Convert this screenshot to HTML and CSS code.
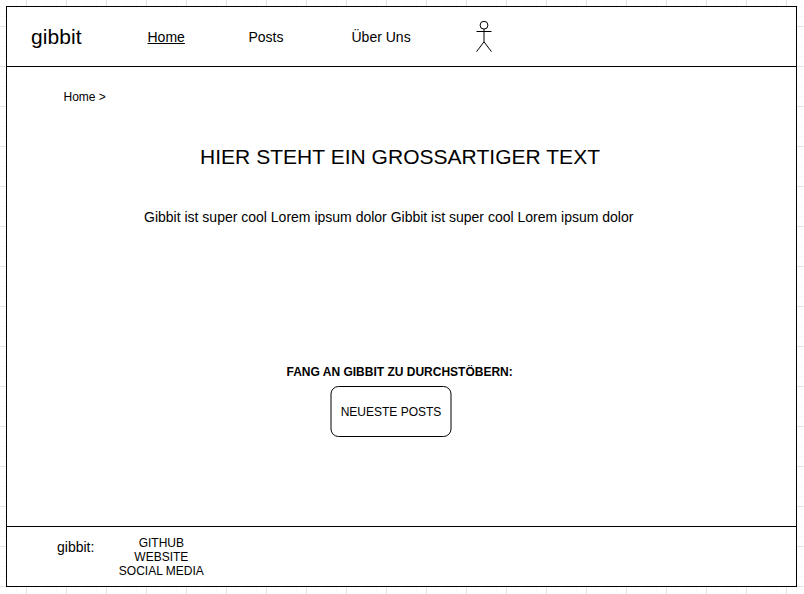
FILE: index.html
```html
<!DOCTYPE html>
<html lang="de">
<head>
<meta charset="utf-8">
<title>gibbit</title>
<link rel="stylesheet" href="styles.css">
</head>
<body>
<div class="page">
  <header class="header">
    <div class="brand">gibbit</div>
    <a class="link active">Home</a>
    <a class="link">Posts</a>
    <a class="link">Über Uns</a>
    <svg class="person" width="18" height="34" viewBox="0 0 18 34" fill="none" stroke="#000">
      <circle cx="9" cy="5.2" r="3.9"/>
      <path d="M9 9.1V21.75M1.5 11.5H16.5M9 21.75L1.5 31.75M9 21.75L16.5 31.75"/>
    </svg>
  </header>
  <main class="main">
    <div class="crumbs">Home &gt;</div>
    <h1 class="title">HIER STEHT EIN GROSSARTIGER TEXT</h1>
    <p class="intro">Gibbit ist super cool Lorem ipsum dolor Gibbit ist super cool Lorem ipsum dolor</p>
    <div class="prompt">FANG AN GIBBIT ZU DURCHSTÖBERN:</div>
    <a class="button">
      <svg class="outline" width="122" height="51" fill="none" stroke="#000">
        <rect x="1" y="0.5" width="120" height="50" rx="7.5"/>
      </svg>
      <span>NEUESTE POSTS</span>
    </a>
  </main>
  <footer class="footer">
    <div class="footer-brand">gibbit:</div>
    <div class="footer-links">
      <div>GITHUB</div>
      <div>WEBSITE</div>
      <div>SOCIAL MEDIA</div>
    </div>
  </footer>
</div>
</body>
</html>
```
FILE: styles.css
```css
* { box-sizing: border-box; }
html { height: 100%; }
body {
  margin: 0;
  height: 594px;
  padding: 6px 7px 7px 6px;
  overflow: hidden;
  font-family: "Liberation Sans", Arial, sans-serif;
  color: #000;
  background-color: #fff;
  background-image:
    linear-gradient(to right, #e3e3e3 1px, transparent 1px),
    linear-gradient(to bottom, #e3e3e3 1px, transparent 1px),
    linear-gradient(to right, #f9f9f9 1px, transparent 1px),
    linear-gradient(to bottom, #f9f9f9 1px, transparent 1px);
  background-size: 40px 40px, 40px 40px, 10px 10px, 10px 10px;
  background-position: 26px 26px, 26px 26px, 6px 6px, 6px 6px;
}
.page {
  display: grid;
  grid-template-rows: 60px 460px 59px;
  height: 581px;
  border: 1px solid #000;
  background: #fff;
}
.header {
  display: grid;
  grid-template-columns: 116.5px 101px 103px 123px 18px;
  align-items: center;
  padding-left: 24px;
  border-bottom: 1px solid #000;
}
.brand { font-size: 21px; line-height: 24px; letter-spacing: 0.1px; }
.link { padding-top: 2px; font-size: 14px; line-height: 17px; }
.active { text-decoration: underline; }
.person { display: block; }
.main {
  display: flex;
  flex-direction: column;
  align-items: flex-start;
  border-bottom: 1px solid #000;
}
.crumbs { margin: 23px 0 0 56.5px; font-size: 12px; line-height: 14px; }
.title { margin: 40px 0 0 193px; font-size: 21px; line-height: 26px; font-weight: 400; white-space: nowrap; letter-spacing: 0.03px; }
.intro { margin: 39px 0 0 137px; font-size: 14px; line-height: 17px; white-space: nowrap; }
.prompt { margin: 139px 0 0 279.5px; font-size: 12px; line-height: 14px; font-weight: 700; white-space: nowrap; }
.button {
  display: grid;
  place-items: center;
  width: 122px;
  height: 51px;
  margin: 7px 0 0 323px;
  font-size: 12px;
}
.button > * { grid-area: 1 / 1; }
.outline { display: block; }
.footer { display: flex; align-items: flex-start; }
.footer-brand { margin: 12px 0 0 50px; font-size: 14px; line-height: 17px; }
.footer-links { margin: 9px 0 0 24.5px; font-size: 12px; line-height: 14px; text-align: center; }
```
